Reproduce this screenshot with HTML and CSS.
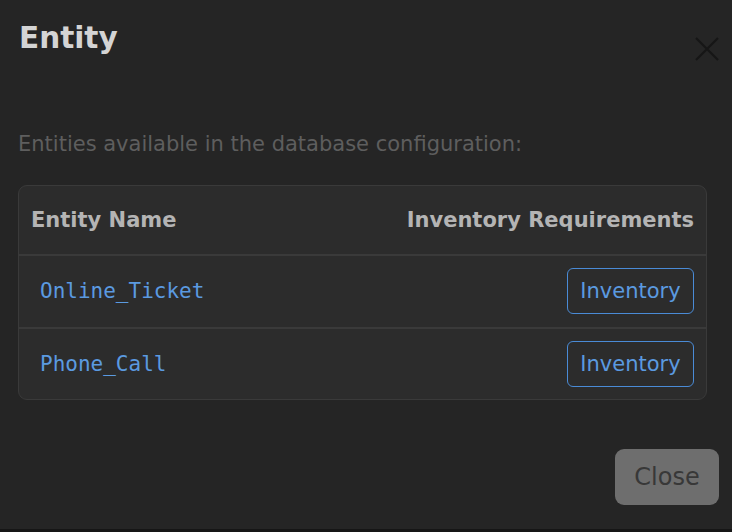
FILE: index.html
```html
<!DOCTYPE html>
<html>
<head>
<meta charset="utf-8">
<link rel="stylesheet" href="styles.css">
</head>
<body>
<div class="dialog">
  <div class="header">
    <h1 class="title">Entity</h1>
    <button class="close-x" aria-label="Close">
      <svg width="26" height="26" viewBox="0 0 26 26"><path d="M2 2 L24 24 M24 2 L2 24" stroke="#161616" stroke-width="2.2" fill="none"/></svg>
    </button>
  </div>
  <p class="desc">Entities available in the database configuration:</p>
  <div class="table">
    <div class="row head">
      <div class="cell">Entity Name</div>
      <div class="cell right">Inventory Requirements</div>
    </div>
    <div class="row">
      <div class="cell mono">Online_Ticket</div>
      <div class="cell right"><button class="inv">Inventory</button></div>
    </div>
    <div class="row">
      <div class="cell mono">Phone_Call</div>
      <div class="cell right"><button class="inv">Inventory</button></div>
    </div>
  </div>
  <div class="footer">
    <button class="close-btn">Close</button>
  </div>
</div>
<div class="bottom-strip"></div>
</body>
</html>
```
FILE: styles.css
```css
html, body {
  margin: 0;
  padding: 0;
  height: 100%;
}
body {
  background: #252525;
  font-family: "DejaVu Sans", sans-serif;
  display: flex;
  flex-direction: column;
  overflow: hidden;
}
.dialog {
  flex: 1;
  padding: 0 25px 0 18px;
}
.header {
  display: flex;
  justify-content: space-between;
  align-items: flex-start;
  height: 80px;
}
.title {
  margin: 18px 0 0 1px;
  font-size: 29.5px;
  font-weight: bold;
  color: #d4d4d4;
  line-height: 40px;
}
.close-x {
  background: none;
  border: none;
  padding: 0;
  margin: 36px -13px 0 0;
  width: 26px;
  height: 26px;
}
.close-x svg { display: block; }
.desc {
  margin: 50px 0 0 0;
  font-size: 21px;
  color: #5e5e5e;
  line-height: 28px;
}
.table {
  margin-top: 27px;
  background: #2c2c2c;
  border: 1.5px solid #3a3a3a;
  border-radius: 9px;
}
.row {
  display: flex;
  justify-content: space-between;
  align-items: center;
  height: 70.5px;
  padding: 0 12px 0 12px;
  border-top: 2px solid #3a3a3a;
}
.row.head {
  border-top: none;
  height: 68px;
}
.head .cell {
  font-weight: bold;
  font-size: 21px;
  color: #b4b4b4;
}
.mono {
  font-family: "DejaVu Sans Mono", monospace;
  font-size: 21px;
  color: #5b9ae0;
  padding-left: 9px;
}
.inv {
  background: transparent;
  border: 1.5px solid #4a8bd6;
  border-radius: 6px;
  color: #5b9ae0;
  font-family: "DejaVu Sans", sans-serif;
  font-size: 21px;
  height: 46px;
  width: 127px;
  padding: 0;
}
.footer {
  display: flex;
  justify-content: flex-end;
  margin-top: 49px;
  margin-right: -12px;
}
.close-btn {
  background: #6e6e6e;
  border: none;
  border-radius: 9px;
  color: #383838;
  font-family: "DejaVu Sans", sans-serif;
  font-size: 24px;
  width: 104px;
  height: 56px;
}
.bottom-strip {
  height: 3px;
  background: #161616;
}
```
